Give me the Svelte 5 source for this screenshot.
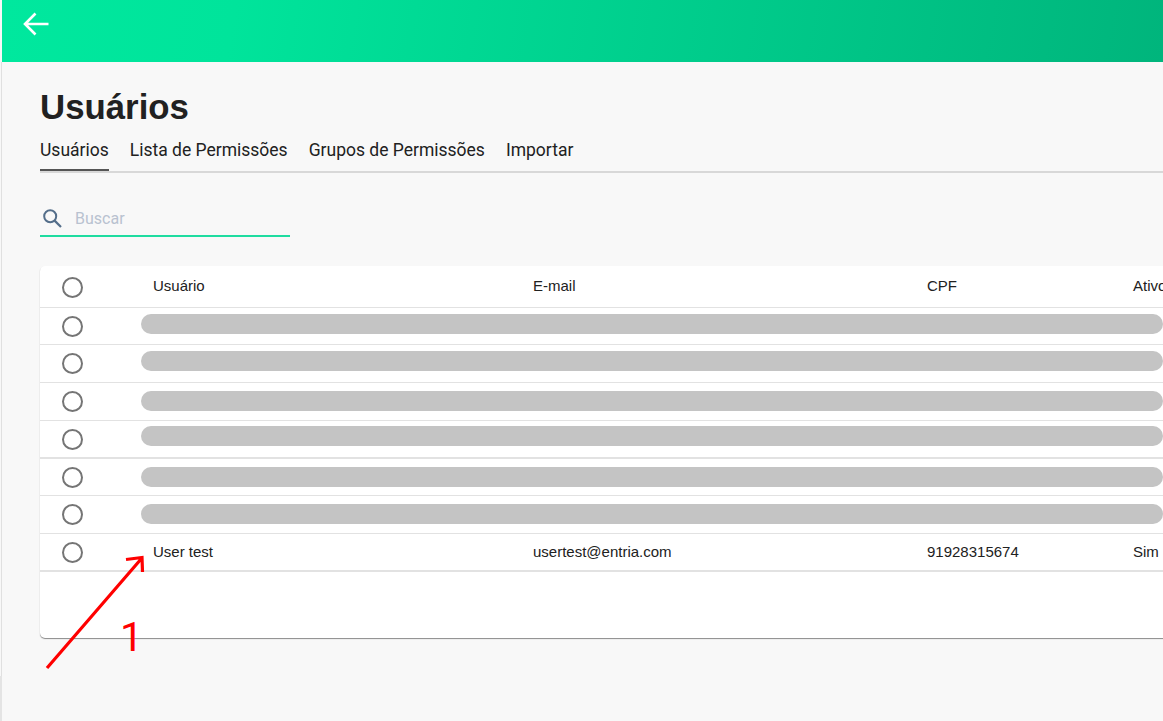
<script>
	// Users list page, with loading rows and one annotation on top
	const tabs = ['Usuários', 'Lista de Permissões', 'Grupos de Permissões', 'Importar'];

	// Loading rows are not evenly spaced in the capture, top is the skeleton's offset in its row
	const loadingRows = [
		{ height: 37, top: 6 },
		{ height: 38, top: 6 },
		{ height: 38, top: 8 },
		{ height: 38, top: 5, thick: true },
		{ height: 37, top: 8 },
		{ height: 38, top: 8 }
	];
</script>

<div class="page">
	<header class="topbar">
		<svg class="back" viewBox="0 0 26 24" width="26" height="24" aria-hidden="true">
			<path d="M25.5 12H2M12.5 1.5 2 12l10.5 10.5" fill="none" stroke="#fff" stroke-width="2.6" />
		</svg>
	</header>

	<main class="content">
		<h1>Usuários</h1>

		<nav class="tabs">
			{#each tabs as tab, i}
				<span class="tab" class:active={i === 0}>{tab}</span>
			{/each}
		</nav>

		<div class="search">
			<svg viewBox="0 0 20 20" width="20" height="20" aria-hidden="true">
				<circle cx="8.2" cy="8.2" r="6" fill="none" stroke="#546e8a" stroke-width="2" />
				<path d="M12.6 12.6 19 19" fill="none" stroke="#546e8a" stroke-width="2.2" />
			</svg>
			<span class="placeholder">Buscar</span>
		</div>

		<section class="table">
			<div class="row head">
				<span class="radio"></span>
				<span class="cell user">Usuário</span>
				<span class="cell email">E-mail</span>
				<span class="cell cpf">CPF</span>
				<span class="cell active-col">Ativo</span>
			</div>
			{#each loadingRows as row}
				<div class="row loading" class:thick={row.thick} style="height: {row.height}px">
					<span class="radio"></span>
					<span class="skeleton" style="margin-top: {row.top}px"></span>
				</div>
			{/each}
			<div class="row thick">
				<span class="radio"></span>
				<span class="cell user">User test</span>
				<span class="cell email">usertest@entria.com</span>
				<span class="cell cpf">91928315674</span>
				<span class="cell active-col">Sim</span>
			</div>
		</section>
	</main>

	<!-- Red annotation drawn over the screenshot -->
	<svg class="arrow" viewBox="0 0 110 120" width="110" height="120" aria-hidden="true">
		<path d="M6 113 100.500 3.500M85 4.500 101 2.500 101.500 17" fill="none" stroke="#ff0000" stroke-width="3.200" />
	</svg>
	<span class="mark">1</span>
</div>

<style>
	:global(body) {
		margin: 0;
		background: #f8f8f8;
	}

	.page {
		position: relative;
		width: 1163px;
		height: 721px;
		overflow: hidden;
		background: #f8f8f8;
		font-family: 'Liberation Sans', sans-serif;
		color: #212121;
		box-sizing: border-box;
		padding-left: 2px;
	}

	/* Thin edge of the window behind the page */
	.page::before {
		content: '';
		position: absolute;
		left: 1px;
		top: 62px;
		width: 1px;
		height: 614px;
		background: #e0e0e0;
	}

	.page::after {
		content: '';
		position: absolute;
		left: 0;
		top: 676px;
		width: 2px;
		height: 45px;
		background: #e4e4e4;
	}

	.topbar {
		height: 62px;
		display: flex;
		align-items: flex-start;
		padding: 12px 0 0 21px;
		box-sizing: border-box;
		background: linear-gradient(100deg, #00e89e 0%, #00e49b 20%, #00b57c 100%);
	}

	.content {
		padding: 0 0 0 38px;
	}

	h1 {
		margin: 25px 0 0;
		font-size: 34.8px;
		line-height: 40px;
		font-weight: 700;
		color: #212121;
	}

	.tabs {
		display: flex;
		gap: 21px;
		margin-top: 7px;
		border-bottom: 2px solid #d8d8d8;
		height: 39px;
		box-sizing: border-box;
		width: 1123px;
		font-family: Roboto, sans-serif;
		font-size: 17.5px;
	}

	.tab {
		height: 37px;
		line-height: 33px;
		color: #212121;
		box-sizing: border-box;
	}

	.tab.active {
		border-bottom: 2px solid #555;
	}

	.search {
		display: flex;
		align-items: center;
		gap: 13px;
		width: 250px;
		height: 36px;
		margin-top: 28px;
		padding: 0 0 0 2px;
		box-sizing: border-box;
		border-bottom: 2px solid #1fdca0;
		font-family: Roboto, sans-serif;
		font-size: 16px;
		color: #b9c2d0;
	}

	.table {
		width: 1200px;
		height: 372px;
		margin-top: 29px;
		background: #fff;
		border-radius: 5px;
		box-shadow: 0 1px 1px rgba(0, 0, 0, 0.45);
		font-size: 15px;
		overflow: hidden;
	}

	.row {
		position: relative;
		height: 38px;
		display: flex;
		align-items: center;
		box-sizing: border-box;
		border-bottom: 1px solid #e2e2e2;
	}

	.row.head {
		height: 42px;
	}

	.row.head .radio {
		margin-top: 1px;
	}

	.row.head .cell {
		margin-top: -2px;
	}

	.row.thick {
		border-bottom-width: 2px;
	}

	.row.thick .cell {
		margin-top: -1px;
	}

	.radio {
		flex: none;
		width: 17px;
		height: 17px;
		margin-left: 22px;
		border: 2px solid #757575;
		border-radius: 50%;
	}

	.skeleton {
		flex: none;
		align-self: flex-start;
		width: 1022px;
		height: 20px;
		margin-left: 58px;
		border-radius: 10px;
		background: #c4c4c4;
	}

	.cell {
		position: absolute;
		white-space: nowrap;
	}

	.user {
		left: 113px;
	}

	.email {
		left: 493px;
	}

	.cpf {
		left: 887px;
	}

	.active-col {
		left: 1093px;
	}

	.arrow {
		position: absolute;
		left: 41px;
		top: 555px;
	}

	.mark {
		position: absolute;
		left: 120px;
		top: 612px;
		font-family: Roboto, sans-serif;
		font-size: 41px;
		line-height: 50px;
		color: #f00;
	}
</style>
